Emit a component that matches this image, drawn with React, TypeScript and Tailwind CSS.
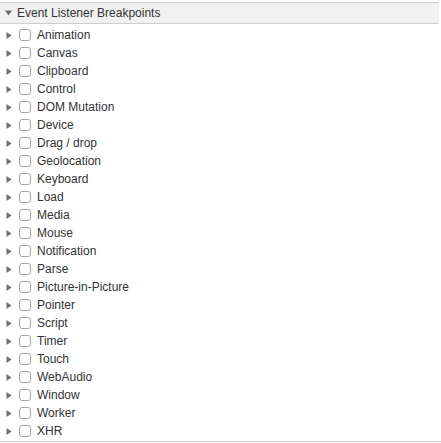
const categories = [
  "Animation",
  "Canvas",
  "Clipboard",
  "Control",
  "DOM Mutation",
  "Device",
  "Drag / drop",
  "Geolocation",
  "Keyboard",
  "Load",
  "Media",
  "Mouse",
  "Notification",
  "Parse",
  "Picture-in-Picture",
  "Pointer",
  "Script",
  "Timer",
  "Touch",
  "WebAudio",
  "Window",
  "Worker",
  "XHR",
];

function TriangleDown() {
  return (
    <svg width="7" height="6" viewBox="0 0 7 6" className="shrink-0">
      <path d="M0 0.5h7L3.5 5.5z" fill="#6e6e6e" />
    </svg>
  );
}

function TriangleRight() {
  return (
    <svg width="6" height="7" viewBox="0 0 6 7" className="shrink-0">
      <path d="M0.5 0v7L5.5 3.5z" fill="#6e6e6e" />
    </svg>
  );
}

export default function App() {
  return (
    <div className="h-[443px] w-[441px] bg-white pt-[2px] font-['Liberation_Sans',Arial,sans-serif] text-[12px] text-[#333333]">
      <div className="mr-[2px] flex h-[22px] items-center gap-[5px] border-y border-[#cecece] bg-[#f1f1f1] pl-[5px]">
        <TriangleDown />
        <span>Event Listener Breakpoints</span>
      </div>
      <ul className="border-b border-[#cecece] pt-[2px] pb-[1px]">
        {categories.map((name) => (
          <li key={name} className="flex h-[18px] items-center pl-[6px]">
            <TriangleRight />
            <span className="ml-[7px] h-[12px] w-[12px] rounded-[3px] border border-[#a5a5a5] bg-white" />
            <span className="ml-[6px]">{name}</span>
          </li>
        ))}
      </ul>
    </div>
  );
}
